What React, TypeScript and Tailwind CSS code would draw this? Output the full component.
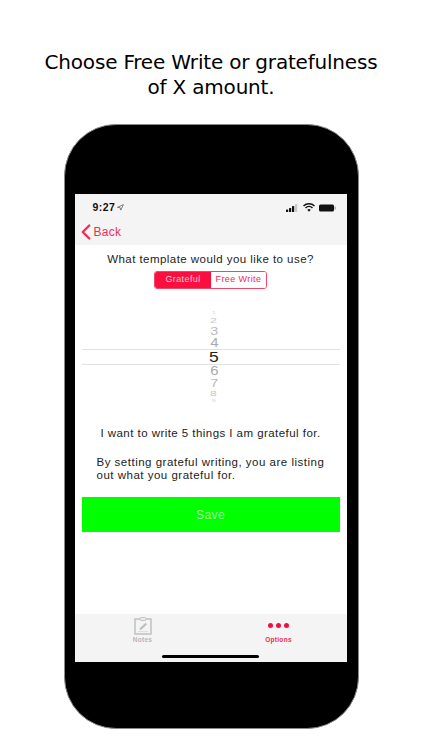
import { ChevronLeft, Navigation } from "lucide-react";

const sans = "font-['Liberation_Sans',Arial,sans-serif]";

const pickerRows = [
  { n: 1, box: "h-[6px] pl-[7px]", text: "text-[6px] text-[#d8d8d8] scale-x-[1.2] scale-y-[0.7]" },
  { n: 2, box: "h-[9px] pl-[7px]", text: "text-[9px] text-[#c6c6c6] scale-x-[1.35] scale-y-[0.85]" },
  { n: 3, box: "h-[12px] pl-[7px]", text: "text-[12px] text-[#bababa] scale-x-[1.2] scale-y-[0.9]" },
  { n: 4, box: "h-[12px] pl-[7px]", text: "text-[12px] text-[#a9a9a9] scale-x-[1.25]" },
  { n: 5, box: "h-[16px] pl-[7px] border-y border-[#e2e2e2] w-full", text: "text-[14px] text-[#222222] scale-x-[1.25] scale-y-[1.05]" },
  { n: 6, box: "h-[12px] pl-[7px]", text: "text-[12px] text-[#a9a9a9] scale-x-[1.25]" },
  { n: 7, box: "h-[12px] pl-[7px]", text: "text-[12px] text-[#bababa] scale-x-[1.2] scale-y-[0.9]" },
  { n: 8, box: "h-[9px] pl-[7px]", text: "text-[9px] text-[#c6c6c6] scale-x-[1.35] scale-y-[0.85]" },
  { n: 9, box: "h-[6px] pl-[7px]", text: "text-[6px] text-[#d8d8d8] scale-x-[1.3] scale-y-[0.7]" },
];

function StatusIcons() {
  return (
    <div className="flex items-center gap-[4px]">
      <svg width="13" height="8" viewBox="0 0 13 8">
        <rect x="0" y="5.5" width="2.2" height="2.5" rx="0.5" fill="#111" />
        <rect x="3" y="4" width="2.2" height="4" rx="0.5" fill="#111" />
        <rect x="6" y="2" width="2.2" height="6" rx="0.5" fill="#111" />
        <rect x="9" y="0" width="2.2" height="8" rx="0.5" fill="#c8c8c8" />
      </svg>
      <svg width="12" height="9" viewBox="0 0 12 9">
        <path d="M0.5 3 A8 8 0 0 1 11.5 3" fill="none" stroke="#111" strokeWidth="1.5" />
        <path d="M2.5 5 A5 5 0 0 1 9.5 5" fill="none" stroke="#111" strokeWidth="1.5" />
        <path d="M4.3 6.8 L6 8.8 L7.7 6.8 A2.5 2.5 0 0 0 4.3 6.8 Z" fill="#111" />
      </svg>
      <svg width="17" height="8" viewBox="0 0 17 8">
        <rect x="0" y="0.5" width="15" height="7" rx="1.5" fill="#111" />
        <rect x="15.5" y="2.5" width="1.2" height="3" rx="0.5" fill="#999" />
      </svg>
    </div>
  );
}

function NotesIcon() {
  return (
    <svg width="18" height="18" viewBox="0 0 18 18" fill="none">
      <rect x="1" y="2" width="16" height="15" stroke="#bdbdbd" strokeWidth="1.4" />
      <rect x="6" y="0.7" width="6" height="2.6" rx="0.8" fill="#f5f4f5" stroke="#bdbdbd" strokeWidth="1" />
      <path d="M5.5 13 L6 11 L11.5 5.8 L13 7.3 L7.6 12.5 Z" fill="#bdbdbd" />
      <path d="M4 14.6 H14" stroke="#d5d5d5" strokeWidth="0.8" />
    </svg>
  );
}

export default function App() {
  return (
    <div className="w-[422px] h-[750px] bg-white flex flex-col items-center overflow-hidden">
      <h1 className="mt-[50px] h-[50px] w-full text-center text-[20px] leading-[25px] tracking-[-0.2px] text-black font-['DejaVu_Sans',sans-serif] font-normal">
        Choose Free Write or gratefulness
        <br />
        of X amount.
      </h1>

      <div className="mt-[24px] w-[295px] h-[605px] bg-black rounded-[52px] border border-[#8a8a8a] px-[10px] pt-[69px] shrink-0">
        <div className={`w-[272px] h-[468px] bg-white flex flex-col ${sans}`}>
          <div className="h-[51px] bg-[#f5f4f5] shrink-0">
            <div className="h-[27px] flex items-center justify-between pl-[18px] pr-[11px]">
              <div className="flex items-center gap-[2px] text-[10.5px] font-semibold tracking-[0.4px] text-[#111]">
                9:27
                <Navigation size={7} strokeWidth={2} className="text-[#333]" />
              </div>
              <StatusIcons />
            </div>
            <div className="flex items-center h-[21px] pl-[4px] text-[#ef2d56]">
              <ChevronLeft size={26} strokeWidth={2.2} className="-ml-[6px] -mr-[5px] shrink-0" />
              <span className="text-[12px] tracking-[0.3px]">Back</span>
            </div>
          </div>

          <div className="flex-1 flex flex-col items-center">
            <p className="mt-[7px] h-[14px] leading-[14px] text-[11.5px] tracking-[0.45px] text-[#222]">
              What template would you like to use?
            </p>
            <div className="mt-[5px] flex w-[113px] h-[18px] rounded-[3px] border border-[#f2476b] overflow-hidden text-[9px] tracking-[0.4px]">
              <div className="w-[56px] bg-[#fb0f3f] text-[#ffc9d4] flex items-center justify-center">Grateful</div>
              <div className="flex-1 bg-white text-[#ef2d56] flex items-center justify-center">Free Write</div>
            </div>

            <div className="mt-[21px] w-[258px] flex flex-col items-center">
              {pickerRows.map((r) => (
                <div key={r.n} className={`${r.box} flex items-center justify-center`}>
                  <span className={`${r.text} leading-none`}>{r.n}</span>
                </div>
              ))}
            </div>

            <p className="mt-[22px] h-[14px] leading-[14px] text-[11.5px] tracking-[0.45px] text-[#222]">
              I want to write 5 things I am grateful for.
            </p>
            <p className="mt-[16px] w-[258px] pl-[15px] text-[11.5px] leading-[13px] tracking-[0.5px] text-[#222]">
              By setting grateful writing, you are listing out what you grateful for.
            </p>
            <button className="mt-[15px] w-[258px] h-[35px] bg-[#00ff00] text-[#a8f5a0] text-[12px] tracking-[0.4px] shrink-0">
              Save
            </button>
          </div>

          <div className="h-[48px] bg-[#f5f4f5] shrink-0 flex flex-col">
            <div className="flex h-[32px] pt-[3px]">
              <div className="w-[136px] flex flex-col items-center">
                <NotesIcon />
                <span className="text-[6.5px] font-semibold tracking-[0.3px] text-[#b5b5b5] leading-[8px] mt-[1px]">Notes</span>
              </div>
              <div className="w-[136px] flex flex-col items-center">
                <div className="h-[18px] flex items-center gap-[3px] pb-[2px]">
                  <span className="size-[5px] rounded-full bg-[#f0103f]" />
                  <span className="size-[5px] rounded-full bg-[#f0103f]" />
                  <span className="size-[5px] rounded-full bg-[#f0103f]" />
                </div>
                <span className="text-[6.5px] font-semibold tracking-[0.3px] text-[#ef2d56] leading-[8px] mt-[1px]">Options</span>
              </div>
            </div>
            <div className="mt-[9px] self-center w-[97px] h-[3px] rounded-full bg-black" />
          </div>
        </div>
      </div>
    </div>
  );
}
